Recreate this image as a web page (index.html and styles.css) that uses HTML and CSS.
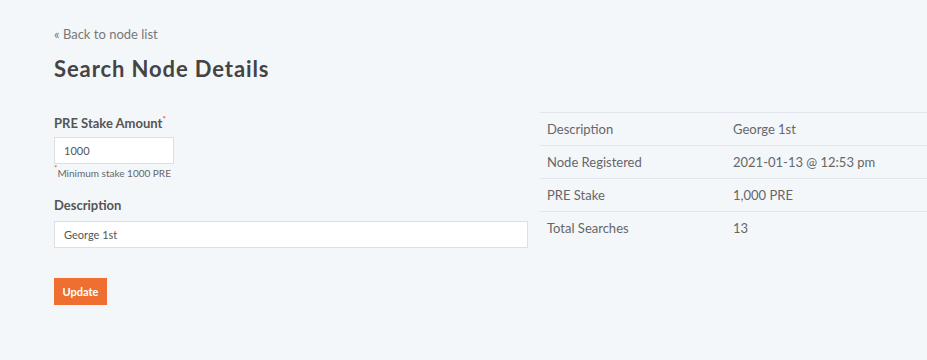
FILE: index.html
```html
<!DOCTYPE html>
<html>
<head>
<meta charset="utf-8">
<link rel="stylesheet" href="styles.css">
</head>
<body>
<div class="page">
  <a class="back" href="#">« Back to node list</a>
  <h1 class="title">Search Node Details</h1>
  <div class="layout">
    <form class="form">
      <div class="field">
        <label class="label">PRE Stake Amount<sup class="req">*</sup></label>
        <input class="input input-small" type="text" value="1000">
        <div class="hint"><sup class="req">*</sup>Minimum stake 1000 PRE</div>
      </div>
      <div class="field field-desc">
        <label class="label">Description</label>
        <input class="input" type="text" value="George 1st">
      </div>
      <button class="btn" type="button">Update</button>
    </form>
    <table class="details">
      <tr><td class="k">Description</td><td>George 1st</td></tr>
      <tr><td class="k">Node Registered</td><td>2021-01-13 @ 12:53 pm</td></tr>
      <tr><td class="k">PRE Stake</td><td>1,000 PRE</td></tr>
      <tr><td class="k">Total Searches</td><td>13</td></tr>
    </table>
  </div>
</div>
</body>
</html>
```
FILE: styles.css
```css
html, body {
  margin: 0;
  padding: 0;
  background: #f4f7fa;
  font-family: Lato, "Open Sans", "Liberation Sans", sans-serif;
  color: #555;
}
.page {
  padding: 26px 0 0 54px;
}
.back {
  display: block;
  font-size: 13px;
  line-height: 16px;
  color: #777;
  text-decoration: none;
}
.title {
  margin: 12px 0 0;
  font-size: 22px;
  line-height: 30px;
  font-weight: 700;
  letter-spacing: 0.9px;
  color: #444;
}
.layout {
  display: grid;
  grid-template-columns: 474px 1fr;
  column-gap: 12px;
  margin-top: 26px;
}
.form {
  padding-top: 5px;
}
.field {
  margin-bottom: 17px;
}
.label {
  display: block;
  font-size: 13px;
  line-height: 16px;
  font-weight: 700;
  color: #555;
  margin-bottom: 6px;
}
.field-desc .label {
  margin-bottom: 8px;
}
.req {
  color: #e8553f;
  font-size: 8px;
  line-height: 0;
  vertical-align: 6px;
}
.input {
  display: block;
  box-sizing: border-box;
  width: 474px;
  height: 27px;
  padding: 0 9px;
  border: 1px solid #dcdfe3;
  background: #fff;
  font-family: inherit;
  font-size: 11px;
  color: #555;
  outline: none;
}
.input-small {
  width: 120px;
}
.hint {
  font-size: 10px;
  line-height: 14px;
  color: #666;
  margin-top: 2px;
}
.btn {
  margin-top: 13px;
  width: 53px;
  height: 27px;
  padding: 0;
  border: none;
  background: #ef6f30;
  color: #fff;
  font-family: inherit;
  font-size: 11px;
  font-weight: 700;
}
.details {
  border-collapse: collapse;
  width: 100%;
  align-self: start;
  margin-top: 2px;
  font-size: 13px;
  color: #666;
}
.details td {
  border-top: 1px solid #e3e6ea;
  height: 32px;
  padding: 0 7px;
  vertical-align: middle;
}
.details td.k {
  width: 172px;
}
```
